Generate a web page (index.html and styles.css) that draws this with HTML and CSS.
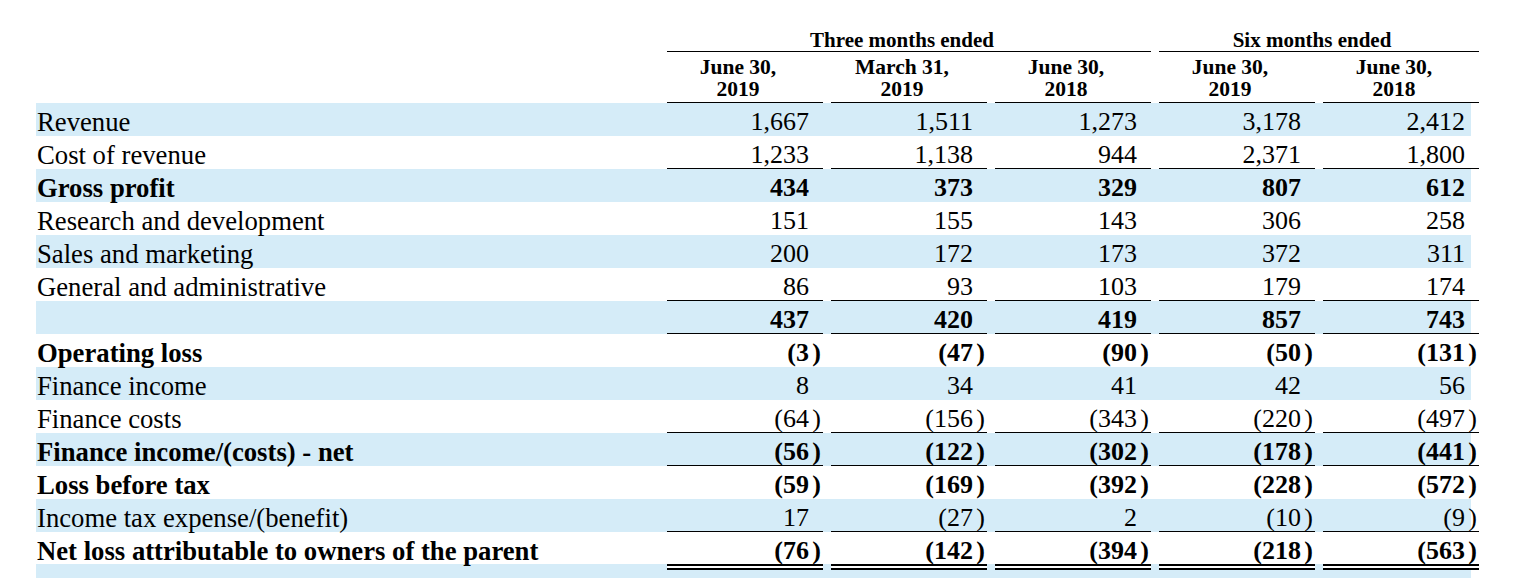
FILE: index.html
```html
<!DOCTYPE html>
<html>
<head>
<meta charset="utf-8">
<link rel="stylesheet" href="styles.css">
</head>
<body>
<div class="sheet">
  <div class="grid head-group">
    <div></div>
    <div class="group g3">Three months ended</div>
    <div class="group g2">Six months ended</div>
  </div>
  <div class="grid head-cols">
    <div></div>
    <div class="colh">June 30,<br>2019</div>
    <div class="colh">March 31,<br>2019</div>
    <div class="colh">June 30,<br>2018</div>
    <div class="colh">June 30,<br>2019</div>
    <div class="colh">June 30,<br>2018</div>
  </div>

  <div class="grid row blue">
    <div class="label">Revenue</div>
    <div class="val"><span>1,667</span><span class="p"></span></div>
    <div class="val"><span>1,511</span><span class="p"></span></div>
    <div class="val"><span>1,273</span><span class="p"></span></div>
    <div class="val"><span>3,178</span><span class="p"></span></div>
    <div class="val"><span>2,412</span><span class="p"></span></div>
  </div>
  <div class="grid row ul">
    <div class="label">Cost of revenue</div>
    <div class="val"><span>1,233</span><span class="p"></span></div>
    <div class="val"><span>1,138</span><span class="p"></span></div>
    <div class="val"><span>944</span><span class="p"></span></div>
    <div class="val"><span>2,371</span><span class="p"></span></div>
    <div class="val"><span>1,800</span><span class="p"></span></div>
  </div>
  <div class="grid row blue bold">
    <div class="label">Gross profit</div>
    <div class="val"><span>434</span><span class="p"></span></div>
    <div class="val"><span>373</span><span class="p"></span></div>
    <div class="val"><span>329</span><span class="p"></span></div>
    <div class="val"><span>807</span><span class="p"></span></div>
    <div class="val"><span>612</span><span class="p"></span></div>
  </div>
  <div class="grid row">
    <div class="label">Research and development</div>
    <div class="val"><span>151</span><span class="p"></span></div>
    <div class="val"><span>155</span><span class="p"></span></div>
    <div class="val"><span>143</span><span class="p"></span></div>
    <div class="val"><span>306</span><span class="p"></span></div>
    <div class="val"><span>258</span><span class="p"></span></div>
  </div>
  <div class="grid row blue">
    <div class="label">Sales and marketing</div>
    <div class="val"><span>200</span><span class="p"></span></div>
    <div class="val"><span>172</span><span class="p"></span></div>
    <div class="val"><span>173</span><span class="p"></span></div>
    <div class="val"><span>372</span><span class="p"></span></div>
    <div class="val"><span>311</span><span class="p"></span></div>
  </div>
  <div class="grid row ul">
    <div class="label">General and administrative</div>
    <div class="val"><span>86</span><span class="p"></span></div>
    <div class="val"><span>93</span><span class="p"></span></div>
    <div class="val"><span>103</span><span class="p"></span></div>
    <div class="val"><span>179</span><span class="p"></span></div>
    <div class="val"><span>174</span><span class="p"></span></div>
  </div>
  <div class="grid row blue bold ul">
    <div class="label"></div>
    <div class="val"><span>437</span><span class="p"></span></div>
    <div class="val"><span>420</span><span class="p"></span></div>
    <div class="val"><span>419</span><span class="p"></span></div>
    <div class="val"><span>857</span><span class="p"></span></div>
    <div class="val"><span>743</span><span class="p"></span></div>
  </div>
  <div class="grid row bold">
    <div class="label">Operating loss</div>
    <div class="val"><span>(3</span><span class="p">)</span></div>
    <div class="val"><span>(47</span><span class="p">)</span></div>
    <div class="val"><span>(90</span><span class="p">)</span></div>
    <div class="val"><span>(50</span><span class="p">)</span></div>
    <div class="val"><span>(131</span><span class="p">)</span></div>
  </div>
  <div class="grid row blue">
    <div class="label">Finance income</div>
    <div class="val"><span>8</span><span class="p"></span></div>
    <div class="val"><span>34</span><span class="p"></span></div>
    <div class="val"><span>41</span><span class="p"></span></div>
    <div class="val"><span>42</span><span class="p"></span></div>
    <div class="val"><span>56</span><span class="p"></span></div>
  </div>
  <div class="grid row ul">
    <div class="label">Finance costs</div>
    <div class="val"><span>(64</span><span class="p">)</span></div>
    <div class="val"><span>(156</span><span class="p">)</span></div>
    <div class="val"><span>(343</span><span class="p">)</span></div>
    <div class="val"><span>(220</span><span class="p">)</span></div>
    <div class="val"><span>(497</span><span class="p">)</span></div>
  </div>
  <div class="grid row blue bold ul">
    <div class="label">Finance income/(costs) - net</div>
    <div class="val"><span>(56</span><span class="p">)</span></div>
    <div class="val"><span>(122</span><span class="p">)</span></div>
    <div class="val"><span>(302</span><span class="p">)</span></div>
    <div class="val"><span>(178</span><span class="p">)</span></div>
    <div class="val"><span>(441</span><span class="p">)</span></div>
  </div>
  <div class="grid row bold">
    <div class="label">Loss before tax</div>
    <div class="val"><span>(59</span><span class="p">)</span></div>
    <div class="val"><span>(169</span><span class="p">)</span></div>
    <div class="val"><span>(392</span><span class="p">)</span></div>
    <div class="val"><span>(228</span><span class="p">)</span></div>
    <div class="val"><span>(572</span><span class="p">)</span></div>
  </div>
  <div class="grid row blue ul">
    <div class="label">Income tax expense/(benefit)</div>
    <div class="val"><span>17</span><span class="p"></span></div>
    <div class="val"><span>(27</span><span class="p">)</span></div>
    <div class="val"><span>2</span><span class="p"></span></div>
    <div class="val"><span>(10</span><span class="p">)</span></div>
    <div class="val"><span>(9</span><span class="p">)</span></div>
  </div>
  <div class="grid row bold last">
    <div class="label">Net loss attributable to owners of the parent</div>
    <div class="val"><span>(76</span><span class="p">)</span></div>
    <div class="val"><span>(142</span><span class="p">)</span></div>
    <div class="val"><span>(394</span><span class="p">)</span></div>
    <div class="val"><span>(218</span><span class="p">)</span></div>
    <div class="val"><span>(563</span><span class="p">)</span></div>
  </div>
  <div class="grid filler blue">
    <div></div>
    <div class="dbl"></div>
    <div class="dbl"></div>
    <div class="dbl"></div>
    <div class="dbl"></div>
    <div class="dbl"></div>
  </div>
</div>
</body>
</html>
```

FILE: styles.css
```css
html, body {
  margin: 0;
  padding: 0;
  background: #fff;
}

body {
  font-family: "Liberation Serif", "Times New Roman", serif;
  color: #000;
  overflow: hidden;
}

.sheet {
  padding-left: 36px;
  width: 1435px;
}

.grid {
  display: grid;
  grid-template-columns: 623px repeat(5, 156px);
  column-gap: 8px;
  width: 1435px;
}

.head-group {
  padding-top: 29px;
}

.group {
  font-weight: bold;
  font-size: 21px;
  line-height: 22px;
  text-align: center;
  padding-right: 14px;
  border-bottom: 1px solid #000;
}

.g3 {
  grid-column: span 3;
}

.g2 {
  grid-column: span 2;
}

.colh {
  font-weight: bold;
  font-size: 21.5px;
  line-height: 22px;
  text-align: center;
  padding: 4px 14px 2px 0;
  border-bottom: 1px solid #000;
}

.row {
  grid-template-rows: 33px;
  height: 33px;
  font-size: 26px;
}

.row > div {
  box-sizing: border-box;
  padding-top: 5px;
  line-height: 28px;
  white-space: nowrap;
}

.row.last {
  grid-template-rows: 32px;
  height: 32px;
}

.label {
  padding-left: 1px;
  font-size: 26.7px;
}

.val {
  display: flex;
  justify-content: flex-end;
}

.p {
  display: inline-block;
  width: 14px;
  padding-right: 2px;
  box-sizing: border-box;
  text-align: right;
}

.bold {
  font-weight: bold;
}

.blue {
  background: #d5ecf8;
}

.ul .val {
  border-bottom: 1px solid #000;
}

.filler {
  height: 14px;
}

.dbl {
  height: 6px;
  box-sizing: border-box;
  background: #fff;
  border-top: 2px solid #000;
  border-bottom: 2px solid #000;
}
```
